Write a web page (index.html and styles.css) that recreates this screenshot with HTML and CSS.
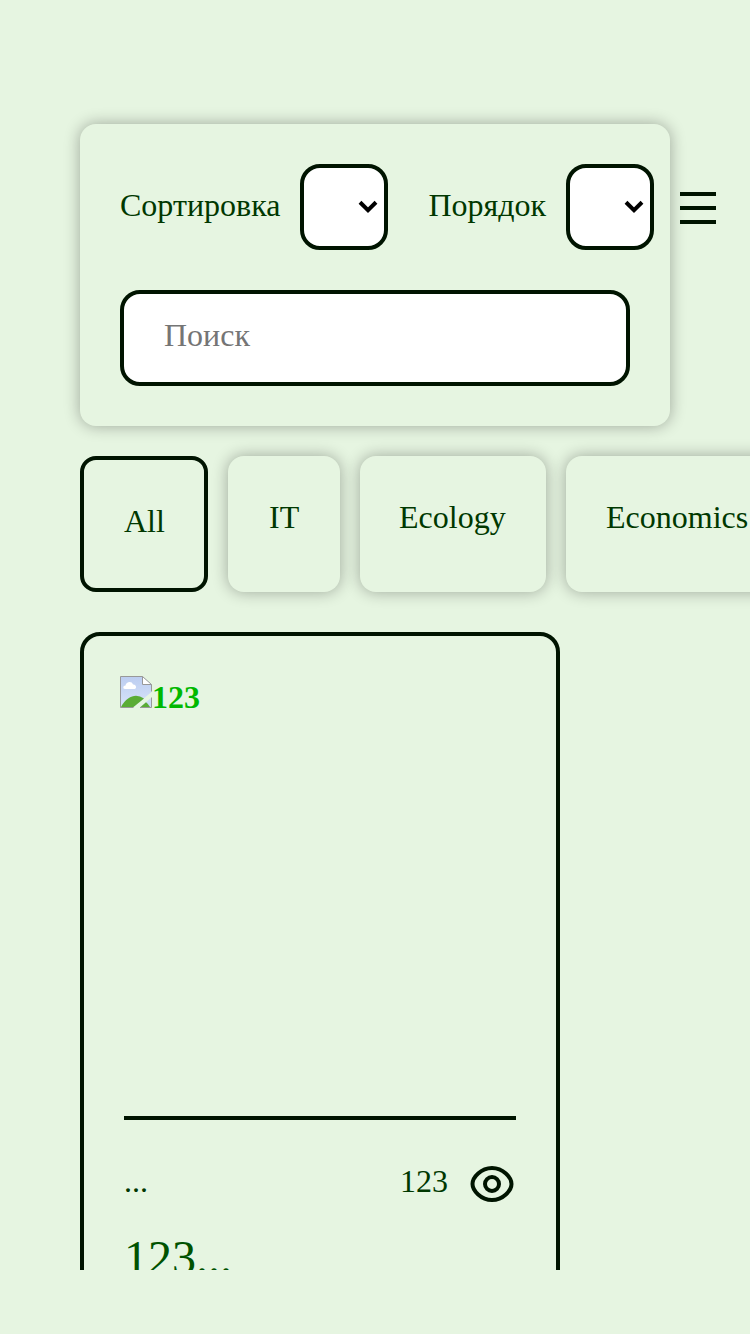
FILE: index.html
```html
<!DOCTYPE html>
<html lang="ru">
<head>
<meta charset="utf-8">
<title>Projects</title>
<link rel="stylesheet" href="styles.css">
</head>
<body>
<div class="page">
  <header class="top">
    <form class="filters">
      <div class="sorting">
        <label class="field"><span class="label">Сортировка</span>
          <span class="select"><svg class="chevron" width="20" height="14" viewBox="0 0 20 14"><path d="M2 2.3 10 10.1 18 2.3" fill="none" stroke="#000" stroke-width="4"/></svg></span>
        </label>
        <label class="field"><span class="label">Порядок</span>
          <span class="select"><svg class="chevron" width="20" height="14" viewBox="0 0 20 14"><path d="M2 2.3 10 10.1 18 2.3" fill="none" stroke="#000" stroke-width="4"/></svg></span>
        </label>
      </div>
      <input class="search" type="text" placeholder="Поиск">
    </form>
    <div class="menu"><i class="bar"></i><i class="bar"></i><i class="bar"></i></div>
  </header>
  <nav class="tabs">
    <a class="tab active">All</a>
    <a class="tab tab-it">IT</a>
    <a class="tab tab-ecology">Ecology</a>
    <a class="tab">Economics</a>
  </nav>
  <main class="content">
    <article class="card">
      <div class="cover">
        <svg width="32" height="32" viewBox="0 0 32 32">
          <defs><linearGradient id="sky" x2="0" y2="1"><stop stop-color="#bccdf0"/><stop offset="1" stop-color="#d8e4fa"/></linearGradient></defs>
          <path d="M.5.5H22.5L31.5 8.5V16L13 31.5H.5z" fill="url(#sky)"/>
          <path d="M20 31.5 31.500 21.500V31.500z" fill="#ccdaf6"/>
          <path d="M1 31C5 23 11 19.700 16 19.700Q20 19.700 24 22.500L13.500 31z" fill="#5aac35"/>
          <path d="M20.500 31 26 26.200Q28.500 28 30 31z" fill="#5aac35"/>
          <path d="M5 13C2.500 13 3 9.500 5.500 9.500 6 5.500 12 4.500 13 8.500 16.500 8 17 13 14.500 13z" fill="#fff"/>
          <path d="M22.500.5V8.500H31.500z" fill="#fff"/>
          <path d="M13.500 31.500H.5V.5H22.500L31.500 8.500V15.500M22.500.5V8.500H31.500M31.500 21.500V31.500H20" fill="none" stroke="#989898"/>
        </svg><span class="alt">123</span>
      </div>
      <div class="meta">
        <span class="author">...</span>
        <span class="views">123
          <svg width="44" height="36" viewBox="0 0 44 36" fill="none" stroke="#001400" stroke-width="4"><path d="M22 2C33 2 41.500 11.500 41.500 18S33 34 22 34 2.500 24.500 2.500 18 11 2 22 2z"/><circle cx="22" cy="18" r="7"/></svg>
        </span>
      </div>
      <h2 class="title">123...</h2>
    </article>
  </main>
</div>
</body>
</html>
```
FILE: styles.css
```css
* { box-sizing: border-box; }

body {
  margin: 0;
  background: #e6f5e1;
  color: #003800;
  font: 32px/36px "Liberation Serif", "Times New Roman", serif;
}

.page {
  display: flex;
  flex-direction: column;
  width: 750px;
  height: 1334px;
  padding: 124px 0 64px 80px;
  overflow: hidden;
}

.top {
  display: flex;
  flex: none;
  gap: 10px;
}

.filters {
  display: flex;
  flex-direction: column;
  gap: 40px;
  width: 590px;
  height: 302px;
  padding: 40px;
  border-radius: 16px;
  box-shadow: 0 0 16px rgba(0, 0, 0, .32);
}

.sorting {
  display: flex;
  gap: 40px;
}

.field {
  display: flex;
  flex: none;
  align-items: center;
  gap: 20px;
  height: 86px;
}

.label { padding-bottom: 4px; }

.select {
  display: flex;
  align-items: center;
  justify-content: flex-end;
  width: 88px;
  height: 86px;
  padding-right: 6px;
  border: 4px solid #001400;
  border-radius: 20px;
  background: #fff;
}

.search {
  width: 510px;
  height: 96px;
  padding: 0 40px 6px;
  border: 4px solid #001400;
  border-radius: 20px;
  background: #fff;
  font: inherit;
}

.search::placeholder { color: #757575; }

.menu {
  display: flex;
  flex-direction: column;
  gap: 10px;
  width: 36px;
  padding-top: 68px;
}

.bar {
  height: 4px;
  background: #001400;
}

.tabs {
  display: flex;
  flex: none;
  gap: 20px;
  margin-top: 30px;
}

.tab {
  flex: none;
  height: 136px;
  padding: 43px 40px;
  border-radius: 16px;
  box-shadow: 0 0 16px rgba(0, 0, 0, .32);
}

.tab.active {
  width: 128px;
  border: 4px solid #001400;
  box-shadow: none;
}

.tab-it { width: 112px; padding-left: 41px; }

.tab-ecology { width: 186px; padding-left: 39px; }

.content {
  flex: 1;
  min-height: 0;
  margin-top: 40px;
  overflow: hidden;
}

.card {
  width: 480px;
  height: 800px;
  padding: 40px;
  border: 4px solid #001400;
  border-radius: 20px;
}

.cover {
  display: flex;
  height: 440px;
  margin-left: -4px;
  color: #00b800;
  font-weight: bold;
}

.alt { padding-top: 3px; }

.meta {
  display: flex;
  justify-content: space-between;
  height: 86px;
  padding-top: 43px;
  border-top: 4px solid #001400;
}

.views {
  display: flex;
  gap: 22px;
  padding-right: 2px;
}

.views svg { margin-top: 3px; }

.title {
  margin: 28px 0 0;
  color: #005200;
  font-size: 48px;
  font-weight: normal;
  line-height: 56px;
}
```
